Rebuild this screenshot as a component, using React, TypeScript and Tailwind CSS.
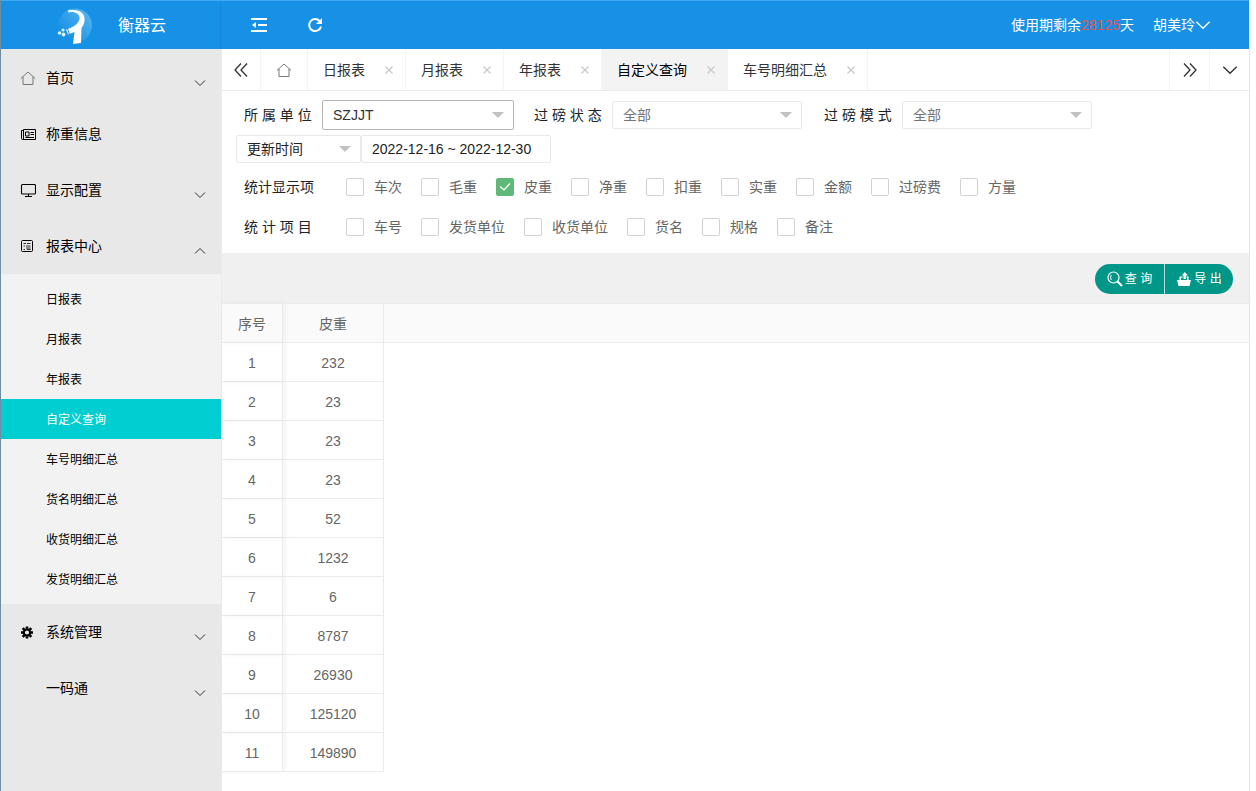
import React, { useState } from "react";

type MenuItem = {
  label: string;
  icon: React.ReactNode;
  arrow?: "up" | "down";
  children?: string[];
};

const HomeIcon = () => (
  <svg className="h-4 w-4 text-[#777]" viewBox="0 0 16 16" fill="none" stroke="currentColor" strokeWidth="1">
    <path d="M0.8 8.500 L8 2 L15.2 8.500 M3 7 V14.500 H13 V7" />
  </svg>
);

const NewsIcon = () => (
  <svg className="h-4 w-4" viewBox="0 0 16 16" fill="none" stroke="currentColor" strokeWidth="1">
    <path d="M3.500 3.500 H15.500 V13.500 H2.500 Q1.500 13.500 1.500 12.500 V4.500 H3.500 M3.500 3.500 V13" />
    <path d="M5.500 6 H9 V10 H5.500 Z M10.500 6.500 H14 M10.500 8.500 H14 M5.500 11.500 H14" />
  </svg>
);

const MonitorIcon = () => (
  <svg className="h-4 w-4" viewBox="0 0 16 16" fill="none" stroke="currentColor" strokeWidth="1.1">
    <rect x="1.500" y="2.500" width="14" height="9.500" rx="1" />
    <path d="M8.500 12 V14 M5 14.500 H12" />
  </svg>
);

const FormIcon = () => (
  <svg className="h-4 w-4" viewBox="0 0 16 16" fill="none" stroke="currentColor" strokeWidth="1">
    <rect x="1.500" y="2.500" width="11" height="11" rx="1" />
    <path d="M3.500 5.500 H6 M7 5.500 H10.500 M3.500 8 H5 M6 8 H10.500 M6 10 H10.500 M3.500 11.500 H5 M7 11.500 H10.500" strokeWidth="0.8" />
  </svg>
);

const GearIcon = () => (
  <svg className="h-4 w-4" viewBox="0 0 16 16" fill="none" stroke="currentColor">
    <circle cx="7" cy="8.500" r="3.200" strokeWidth="2.200" />
    <path
      d="M7 2.500 V4.500 M7 12.500 V14.500 M1 8.500 H3 M11 8.500 H13 M2.700 4.200 L4.200 5.700 M9.800 11.300 L11.300 12.800 M11.300 4.200 L9.800 5.700 M4.200 11.300 L2.700 12.800"
      strokeWidth="2.600"
    />
  </svg>
);

const Chevron = ({ up = false, className = "h-3 w-3 text-[#333]" }: { up?: boolean; className?: string }) => (
  <svg className={className} viewBox="0 0 12 12" fill="none" stroke="currentColor" strokeWidth="1">
    <path d={up ? "M1 8.500 L6 3.500 L11 8.500" : "M1 3.500 L6 8.500 L11 3.500"} />
  </svg>
);

const DoubleChevron = ({ right = false }: { right?: boolean }) => (
  <svg className="h-4 w-4" viewBox="0 0 16 16" fill="none" stroke="currentColor" strokeWidth="1.300">
    <path d={right ? "M2 1.500 L8 8 L2 14.500 M8 1.500 L14 8 L8 14.500" : "M8 1.500 L2 8 L8 14.500 M14 1.500 L8 8 L14 14.500"} />
  </svg>
);

const Logo = () => (
  <svg className="h-9 w-9" viewBox="0 0 36 36" fill="none">
    <defs>
      <linearGradient id="globe" x1="0" y1="1" x2="1" y2="0">
        <stop offset="0.2" stopColor="#1691e6" />
        <stop offset="1" stopColor="#5bb9ef" />
      </linearGradient>
    </defs>
    <circle cx="18" cy="17.500" r="17" fill="url(#globe)" />
    <path
      d="M12 2.500 C20 1 27 4 27.500 10 C28 15 26 18 24.500 20 L24 35 L16 36 L17.500 24 L11 26.500 L9 21.500 C16 19.500 21.500 16 22.500 11 C23.300 6.500 19 3.500 12 3.800 Z"
      fill="#fff"
    />
    <g fill="#d9f3ff">
      <circle cx="12.500" cy="3" r="1.500" />
      <circle cx="2.500" cy="25" r="1.800" />
      <circle cx="6" cy="22" r="1.600" />
      <circle cx="6.500" cy="26.500" r="1.900" />
    </g>
    <path d="M10.500 20.500 L12.500 26.500" stroke="#1691e6" strokeWidth="1" />
  </svg>
);

const menu: MenuItem[] = [
  { label: "首页", icon: <HomeIcon />, arrow: "down" },
  { label: "称重信息", icon: <NewsIcon /> },
  { label: "显示配置", icon: <MonitorIcon />, arrow: "down" },
  {
    label: "报表中心",
    icon: <FormIcon />,
    arrow: "up",
    children: [
      "日报表",
      "月报表",
      "年报表",
      "自定义查询",
      "车号明细汇总",
      "货名明细汇总",
      "收货明细汇总",
      "发货明细汇总",
    ],
  },
  { label: "系统管理", icon: <GearIcon />, arrow: "down" },
  { label: "一码通", icon: null, arrow: "down" },
];

const tabs = ["日报表", "月报表", "年报表", "自定义查询", "车号明细汇总"];
const displayItems = ["车次", "毛重", "皮重", "净重", "扣重", "实重", "金额", "过磅费", "方量"];
const groupItems = ["车号", "发货单位", "收货单位", "货名", "规格", "备注"];
const weights = [232, 23, 23, 23, 52, 1232, 6, 8787, 26930, 125120, 149890];

const Header = () => (
  <header className="flex h-[49px] items-center border-t border-[#41a9f2] bg-[#1691e6] text-sm text-white">
    <div className="flex h-full w-[220px] shrink-0 items-center gap-[25px] border-r border-[#1487d8] pt-0.5 pl-14 text-base">
      <Logo />
      衡器云
    </div>
    <button className="ml-7 flex h-5 w-5 items-center justify-center" aria-label="收起菜单">
      <svg className="h-4 w-4" viewBox="0 0 16 16" fill="none" stroke="currentColor" strokeWidth="2">
        <path d="M0 2 H16 M7 8 H16 M0 14 H16" />
        <path d="M5 5 V11 L1 8 Z" fill="currentColor" stroke="none" />
      </svg>
    </button>
    <button className="ml-9 flex h-5 w-5 items-center justify-center" aria-label="刷新">
      <svg className="h-4 w-4" viewBox="0 0 16 16" fill="none" stroke="currentColor" strokeWidth="2">
        <path d="M12.600 4 A6 6 0 1 0 14 9.500" />
        <path d="M15 1 V7 H9 Z" fill="currentColor" stroke="none" />
      </svg>
    </button>
    <div className="ml-auto">
      使用期剩余<span className="text-[#e5534f]">28125</span>天
    </div>
    <button className="mr-[38px] ml-[19px] flex items-center">
      胡美玲
      <Chevron className="h-4 w-4" />
    </button>
  </header>
);

const Sidebar = ({ active, onSelect }: { active: string; onSelect: (name: string) => void }) => (
  <nav className="w-[220px] shrink-0 bg-[#e8e8e8] pt-px text-black">
    {menu.map((item) => (
      <div key={item.label}>
        <button className="flex h-14 w-full items-center pr-[15px] pl-[19px] text-left text-sm">
          <span className="w-[26px]">{item.icon}</span>
          <span className="flex-1">{item.label}</span>
          {item.arrow && (
            <span className="pt-[10px]">
              <Chevron up={item.arrow === "up"} />
            </span>
          )}
        </button>
        {item.children && (
          <div className="bg-[#f2f2f2] py-[5px]">
            {item.children.map((name) => (
              <a
                key={name}
                href="#"
                onClick={() => onSelect(name)}
                className={`flex h-10 items-center pt-0.5 pl-[45px] text-xs ${
                  name === active ? "bg-[#00ced1] text-white" : "hover:bg-gray-200"
                }`}
              >
                {name}
              </a>
            ))}
          </div>
        )}
      </div>
    ))}
  </nav>
);

const TabBar = ({ active, onSelect }: { active: string; onSelect: (name: string) => void }) => (
  <div className="flex h-[42px] border-b border-[#ebebeb] text-sm text-[#333]">
    <button className="flex w-[39px] items-center justify-center border-r border-[#f4f4f4]" aria-label="向左">
      <DoubleChevron />
    </button>
    <button className="flex w-[47px] items-center justify-center border-r border-[#f4f4f4]" aria-label="首页">
      <HomeIcon />
    </button>
    {tabs.map((name) => (
      <div
        key={name}
        className={`flex items-center gap-[19px] border-r border-[#f4f4f4] pr-[11px] pl-[15px] ${
          name === active ? "bg-[#f3f3f3] text-black" : ""
        }`}
      >
        <button onClick={() => onSelect(name)}>{name}</button>
        <button className="text-[#c8c8c8]" aria-label={`关闭${name}`}>
          <svg className="h-[10px] w-[10px]" viewBox="0 0 10 10" fill="none" stroke="currentColor" strokeWidth="1.2">
            <path d="M1.500 1.500 L8.500 8.500 M8.500 1.500 L1.500 8.500" />
          </svg>
        </button>
      </div>
    ))}
    <button className="ml-auto flex w-10 items-center justify-center border-l border-[#f4f4f4]" aria-label="向右">
      <DoubleChevron right />
    </button>
    <button className="flex w-10 items-center justify-center border-l border-[#f4f4f4]" aria-label="更多">
      <Chevron className="h-4 w-4" />
    </button>
  </div>
);

interface SelectProps {
  id: string;
  value: string;
  className: string;
  label?: string;
}

const Select: React.FC<SelectProps> = ({ id, value, className, label }) => (
  <div className="relative">
    <select
      id={id}
      aria-label={label}
      className={`appearance-none rounded-xs border bg-white px-[10px] text-sm focus:outline-none ${className}`}
    >
      <option>{value}</option>
    </select>
    <span className="pointer-events-none absolute top-1/2 right-[10px] -mt-[3px] border-x-6 border-t-6 border-x-transparent border-t-[#c2c2c2]" />
  </div>
);

interface CheckRowProps {
  title: string;
  items: string[];
  checked: string[];
  onToggle: (name: string) => void;
}

const CheckRow: React.FC<CheckRowProps> = ({ title, items, checked, onToggle }) => (
  <fieldset className="flex h-10 items-center">
    <div className="w-[102px] text-[#222]">{title}</div>
    <div className="flex gap-[19px]">
      {items.map((name) => (
        <label key={name} className="flex items-center gap-[10px] text-[#666]">
          <span className="relative flex">
            <input
              type="checkbox"
              checked={checked.includes(name)}
              onChange={() => onToggle(name)}
              className="h-[18px] w-[18px] appearance-none rounded-xs border border-[#d2d2d2] bg-white checked:border-[#5fb878] checked:bg-[#5fb878]"
            />
            {checked.includes(name) && (
              <svg
                className="pointer-events-none absolute inset-0 h-[18px] w-[18px]"
                viewBox="0 0 18 18"
                fill="none"
                stroke="#fff"
                strokeWidth="1.2"
              >
                <path d="M4 8.500 L8 12 L14 5.500" />
              </svg>
            )}
          </span>
          {name}
        </label>
      ))}
    </div>
  </fieldset>
);

const Filters = () => {
  const [checked, setChecked] = useState<string[]>(["皮重"]);

  const toggle = (name: string) => {
    setChecked(checked.includes(name) ? checked.filter((c) => c !== name) : [...checked, name]);
  };

  return (
    <form className="pt-[9px] pb-1.5 pl-[14px] text-sm text-[#222]">
      <div className="flex h-[30px] items-center gap-2 pl-2">
        <label htmlFor="unit" className="w-[70px] whitespace-nowrap">
          所 属 单 位
        </label>
        <Select id="unit" value="SZJJT" className="h-[30px] w-48 border-[#b5b5b5] text-[#333]" />
        <label htmlFor="state" className="ml-3 w-[70px] whitespace-nowrap">
          过 磅 状 态
        </label>
        <Select id="state" value="全部" className="h-7 w-[190px] border-[#e9e9e9] text-[#757575]" />
        <label htmlFor="mode" className="ml-[14px] w-[70px] whitespace-nowrap">
          过 磅 模 式
        </label>
        <Select id="mode" value="全部" className="h-7 w-[190px] border-[#e9e9e9] text-[#757575]" />
      </div>
      <div className="mt-[5px] flex">
        <Select
          id="time"
          label="时间类型"
          value="更新时间"
          className="h-7 w-[125px] border-[#e9e9e9] text-[#222]"
        />
        <input
          type="text"
          aria-label="时间范围"
          defaultValue="2022-12-16 ~ 2022-12-30"
          className="h-7 w-[190px] rounded-xs border border-[#e9e9e9] px-[10px] focus:outline-none"
        />
      </div>
      <div className="mt-1 pl-2">
        <CheckRow title="统计显示项" items={displayItems} checked={checked} onToggle={toggle} />
        <CheckRow title="统 计 项 目" items={groupItems} checked={checked} onToggle={toggle} />
      </div>
    </form>
  );
};

const Toolbar = () => (
  <div className="flex h-[50px] items-center justify-end bg-[#f0f0f0] pt-0.5 pr-4 text-xs text-white">
    <button className="flex h-[30px] w-[69px] items-center justify-center gap-0.5 rounded-l-full bg-[#009688]">
      <svg className="h-4 w-4" viewBox="0 0 16 16" fill="none" stroke="currentColor">
        <circle cx="6.500" cy="6.500" r="5.500" strokeWidth="1.2" />
        <path d="M4.200 4 Q3 6.500 4.200 9" strokeWidth="1" />
        <path d="M10.500 10.500 L15 15" strokeWidth="2.200" />
      </svg>
      查 询
    </button>
    <button className="flex h-[30px] w-[69px] items-center justify-center gap-0.5 rounded-r-full border-l border-[#b2dfdb] bg-[#009688]">
      <svg className="h-4 w-4" viewBox="0 0 16 16" fill="currentColor">
        <path d="M1 9 H15 L13.500 15 H2.500 Z" />
        <path d="M3.500 9 V5.500 H6.500 V6.800 H5 V9 Z M12.500 9 V5.500 H10.500 V6.800 H11.200 V9 Z" />
        <path d="M7.500 8 V4.500 H5.800 L8.800 1 L11.800 4.500 H9.800 V8 Z" />
      </svg>
      导 出
    </button>
  </div>
);

const ResultTable = () => (
  <table className="w-full table-fixed border-separate border-spacing-0 text-center text-sm text-[#666]">
    <thead>
      <tr className="h-10 bg-[#fafafa]">
        <th className="w-[61px] border-y border-r border-[#ebebeb] pt-0.5 font-normal shadow-[2px_0_5px_rgba(0,0,0,0.05)]">序号</th>
        <th className="w-[101px] border-y border-r border-[#ebebeb] pt-0.5 font-normal">皮重</th>
        <th className="border-y border-[#ebebeb]" />
      </tr>
    </thead>
    <tbody>
      {weights.map((weight, index) => (
        <tr key={index} className="h-[39px]">
          <td className="border-r border-b border-[#ebebeb] pt-0.5 shadow-[2px_0_5px_rgba(0,0,0,0.05)]">{index + 1}</td>
          <td className="border-r border-b border-[#ebebeb] pt-0.5">{weight}</td>
          <td />
        </tr>
      ))}
    </tbody>
  </table>
);

export default function App() {
  const [active, setActive] = useState<string>("自定义查询");

  return (
    <div className="mr-[6px] flex min-h-screen flex-col border-r border-l border-r-[#e6e6e6] border-l-[#6d8ea3] bg-white font-['Liberation_Sans','Noto_Sans_CJK_SC',sans-serif]">
      <Header />
      <div className="flex flex-1">
        <Sidebar active={active} onSelect={setActive} />
        <main className="min-w-0 flex-1 border-l border-[#ebebeb]">
          <TabBar active={active} onSelect={setActive} />
          <Filters />
          <Toolbar />
          <ResultTable />
        </main>
      </div>
    </div>
  );
}
